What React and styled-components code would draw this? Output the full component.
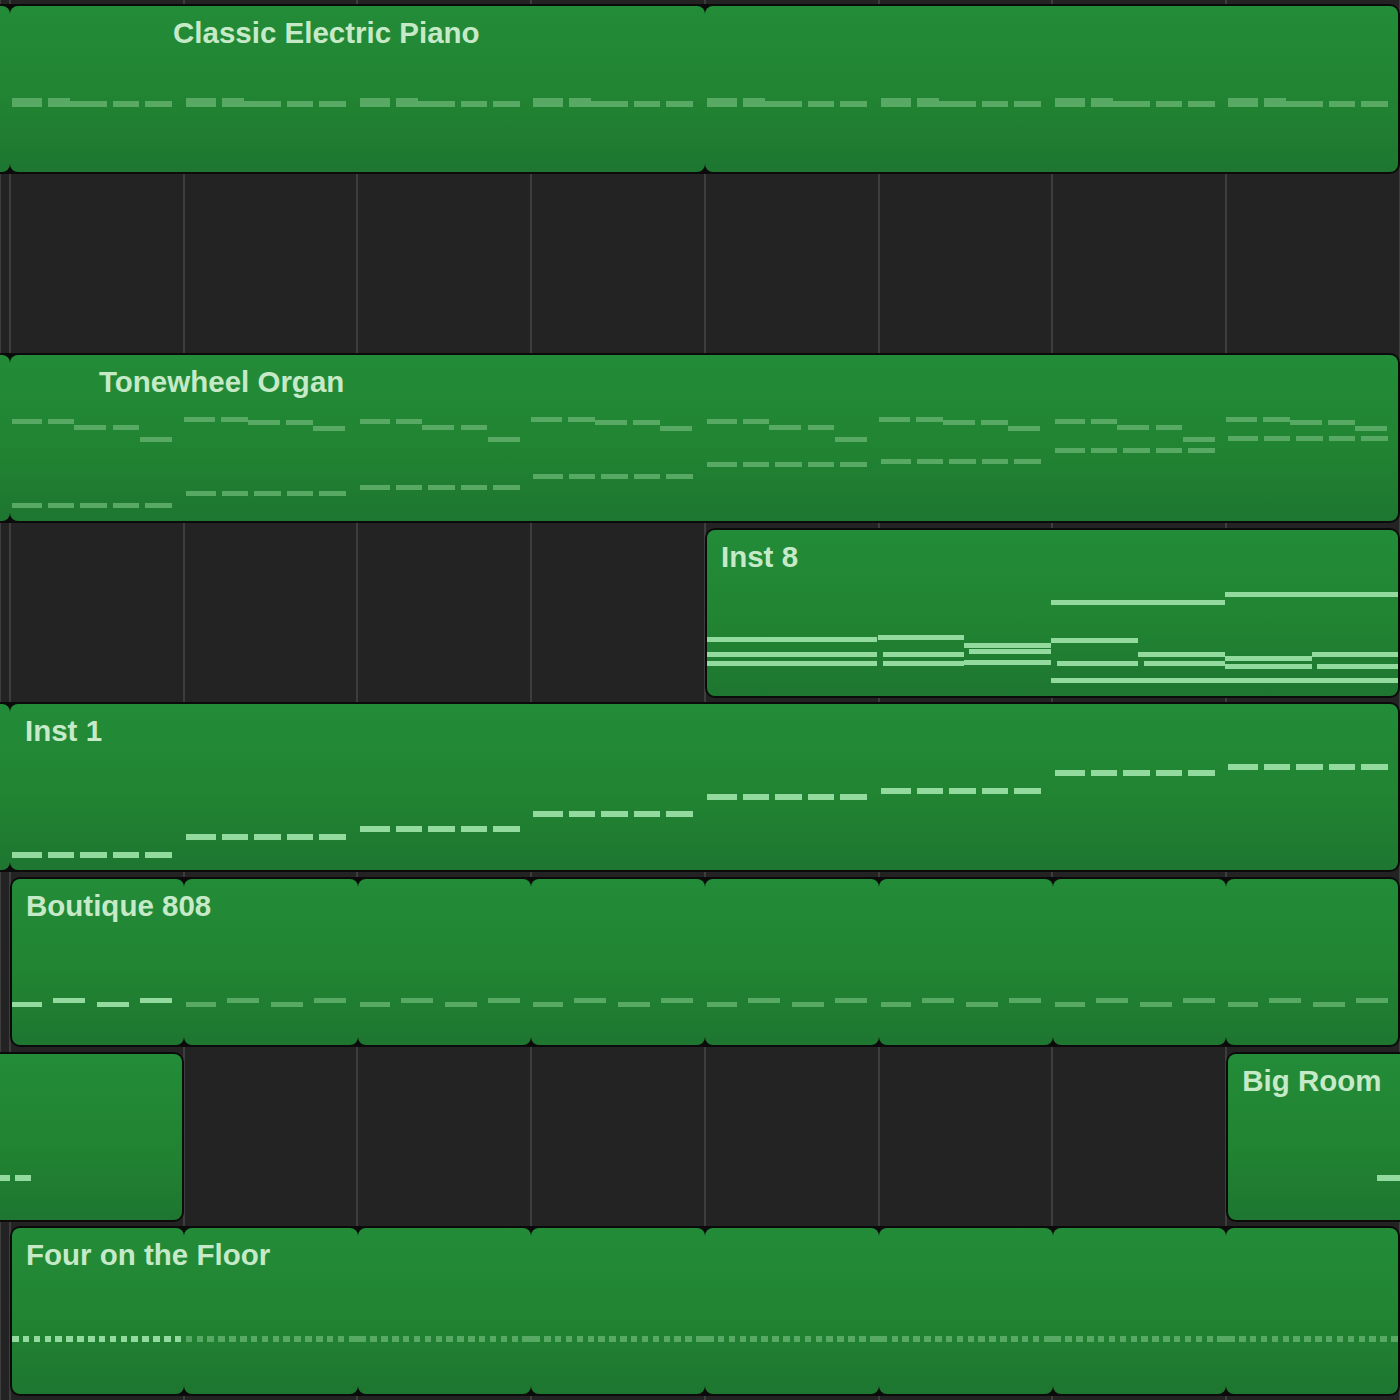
import styled, { createGlobalStyle } from "styled-components";

const BAR = 173.75;
// x of grid lines 1..10 (line 1 = left page edge, line 2 = first bar line)
const LINES = [0, 10, ...Array.from({ length: 8 }, (_, i) => 10 + BAR * (i + 1))];
const barX = (k) => 10 + k * BAR;

const BRIGHT = "#93da9f";
const DIM = "#57a963";

const GlobalStyle = createGlobalStyle`
  body {
    margin: 0;
    background: #232323;
  }
`;

const Arrange = styled.div`
  width: 1400px;
  height: 1400px;
  overflow: hidden;
  box-sizing: border-box;
  padding-top: 4px;
  display: flex;
  flex-direction: column;
  gap: 4.6px;
  background-color: #232323;
  background-image: repeating-linear-gradient(
    to right,
    #3d3d3d 0,
    #3d3d3d 2px,
    transparent 2px,
    transparent ${BAR}px
  );
  background-position: 9px 0;
  font-family: "Liberation Sans", Arial, sans-serif;
`;

const Track = styled.div`
  height: 170px;
  flex: none;
  display: grid;
  grid-template-columns: 10px repeat(8, 1fr);
`;

const Lane = styled.div`
  grid-column: ${(p) => p.$from} / ${(p) => p.$to};
  position: relative;
  display: grid;
  grid-template-columns: ${(p) => p.$cols};
  box-sizing: border-box;
  padding: 2px ${(p) => (p.$openEnd ? 0 : 2)}px 2px ${(p) => (p.$openStart ? 0 : 2)}px;
  background: #0b0b0b;
  border-radius: ${(p) => (p.$openStart ? 0 : 10)}px ${(p) => (p.$openEnd ? 0 : 10)}px
    ${(p) => (p.$openEnd ? 0 : 10)}px ${(p) => (p.$openStart ? 0 : 10)}px;
`;

const Segment = styled.div`
  min-width: 0;
  box-sizing: border-box;
  padding: 12px 0 0 ${(p) => p.$indent}px;
  background: linear-gradient(180deg, #238c38 0%, #218432 55%, #1e7630 100%);
  border-radius: ${(p) => (p.$squareLeft ? 0 : 8)}px ${(p) => (p.$squareRight ? 0 : 8)}px
    ${(p) => (p.$squareRight ? 0 : 8)}px ${(p) => (p.$squareLeft ? 0 : 8)}px;
`;

const Title = styled.div`
  position: relative;
  z-index: 1;
  font-size: 29.5px;
  line-height: 29px;
  font-weight: 700;
  color: #c6eac8;
  white-space: nowrap;
`;

const NoteLayer = styled.div`
  position: absolute;
  inset: 0;
  pointer-events: none;
`;

const Note = styled.span`
  position: absolute;
  background: ${(p) => (p.$bright ? BRIGHT : DIM)};
`;

/* ---------- note data (x in page px, y relative to lane top) ---------- */

const pianoNotes = [];
for (let k = 0; k < 8; k++) {
  const bx = barX(k);
  [
    [2, 30, 94, 9],
    [38, 22, 94, 9],
    [60, 37, 97, 6],
    [103, 26, 97, 6],
    [135, 27, 97, 6],
  ].forEach(([o, w, y, h]) => pianoNotes.push({ x: bx + o, w, y, h }));
}

const organBass = [150, 138, 132, 121, 109, 106, 95, 83];
const organNotes = [];
for (let k = 0; k < 8; k++) {
  const bx = barX(k);
  const upper =
    k % 2 === 0
      ? [[2, 30, 66], [38, 26, 66], [64, 32, 72], [103, 26, 72], [130, 32, 84]]
      : [[0, 31, 64], [37, 27, 64], [64, 32, 67], [102, 27, 67], [129, 32, 73]];
  upper.forEach(([o, w, y]) => organNotes.push({ x: bx + o, w, y, h: 5 }));
  [[2, 30], [38, 26], [70, 27], [103, 26], [135, 27]].forEach(([o, w]) =>
    organNotes.push({ x: bx + o, w, y: organBass[k], h: 5 })
  );
}

const inst8Notes = [
  [707, 877, 109], [707, 877, 124], [707, 877, 133],
  [878, 964, 107], [883, 964, 124], [883, 964, 133],
  [964, 1051, 115], [969, 1051, 121], [964, 1051, 132],
  [1051, 1225, 72], [1051, 1138, 110], [1138, 1225, 124],
  [1057, 1138, 133], [1144, 1225, 133], [1051, 1398, 150],
  [1225, 1398, 64], [1225, 1312, 128], [1312, 1398, 124],
  [1225, 1312, 136], [1317, 1398, 136],
].map(([a, b, y]) => ({ x: a, w: b - a, y, h: 5, bright: true }));

const inst1Y = [150, 132, 124, 109, 92, 86, 68, 62];
const inst1Notes = [];
for (let k = 0; k < 8; k++) {
  const bx = barX(k);
  [[2, 30], [38, 26], [70, 27], [103, 26], [135, 27]].forEach(([o, w]) =>
    inst1Notes.push({ x: bx + o, w, y: inst1Y[k], h: 5.5, bright: true })
  );
}

const drumNotes = [];
for (let k = 0; k < 8; k++) {
  const bx = barX(k);
  [[2, 30, 125], [43, 32, 121], [87, 32, 125], [130, 32, 121]].forEach(([o, w, y]) =>
    drumNotes.push({ x: bx + o, w, y, h: 5, bright: k === 0 })
  );
}

const floorNotes = [];
for (let k = 0; k < 8; k++) {
  const bx = barX(k);
  for (let j = 0; j < 16; j++) {
    const wide = j === 15 && k > 0 && k < 7;
    floorNotes.push({ x: bx + 2 + j * 10.86, w: wide ? 16 : 6.5, y: 110, h: 5.5, bright: k === 0 });
  }
}

const tailNotes = [
  { x: 0, w: 10, y: 123.5, h: 6, bright: true },
  { x: 15, w: 16, y: 123.5, h: 6, bright: true },
];
const bigRoomNotes = [{ x: 1377, w: 23, y: 123.5, h: 6, bright: true }];

/* ---------- tracks ---------- */

const tracks = [
  [{ from: 1, to: 10, openStart: true, spans: [1, 4, 4], label: "Classic Electric Piano", labelSeg: 1, indent: 163, notes: pianoNotes }],
  [],
  [{ from: 1, to: 10, openStart: true, spans: [1, 8], label: "Tonewheel Organ", labelSeg: 1, indent: 89, notes: organNotes }],
  [{ from: 6, to: 10, spans: [4], label: "Inst 8", labelSeg: 0, indent: 14, notes: inst8Notes }],
  [{ from: 1, to: 10, openStart: true, spans: [1, 8], label: "Inst 1", labelSeg: 1, indent: 15, notes: inst1Notes }],
  [{ from: 2, to: 10, spans: [1, 1, 1, 1, 1, 1, 1, 1], label: "Boutique 808", labelSeg: 0, indent: 14, notes: drumNotes }],
  [
    { from: 1, to: 3, openStart: true, spans: [2], notes: tailNotes },
    { from: 9, to: 10, openEnd: true, spans: [1], label: "Big Room", labelSeg: 0, indent: 14, notes: bigRoomNotes },
  ],
  [{ from: 2, to: 10, spans: [1, 1, 1, 1, 1, 1, 1, 1], label: "Four on the Floor", labelSeg: 0, indent: 14, notes: floorNotes }],
];

function Region({ from, to, openStart, openEnd, spans, label, labelSeg, indent, notes }) {
  const padL = openStart ? 0 : 2;
  const padR = openEnd ? 0 : 2;
  let line = from;
  const widths = spans.map((s, i) => {
    let w = LINES[line + s - 1] - LINES[line - 1];
    line += s;
    if (i === 0) w -= padL;
    if (i === spans.length - 1) w -= padR;
    return w;
  });
  const x0 = LINES[from - 1];

  return (
    <Lane
      $from={from}
      $to={to}
      $openStart={openStart}
      $openEnd={openEnd}
      $cols={widths.map((w) => `${w}px`).join(" ")}
    >
      {widths.map((_, i) => (
        <Segment
          key={i}
          $indent={i === labelSeg ? indent : 0}
          $squareLeft={openStart && i === 0}
          $squareRight={openEnd && i === widths.length - 1}
        >
          {i === labelSeg && label ? <Title>{label}</Title> : null}
        </Segment>
      ))}
      <NoteLayer>
        {notes.map((n, i) => (
          <Note
            key={i}
            $bright={n.bright}
            style={{ left: n.x - x0, top: n.y, width: n.w, height: n.h }}
          />
        ))}
      </NoteLayer>
    </Lane>
  );
}

export default function App() {
  return (
    <>
      <GlobalStyle />
      <Arrange>
        {tracks.map((regions, r) => (
          <Track key={r}>
            {regions.map((reg, i) => (
              <Region key={i} {...reg} />
            ))}
          </Track>
        ))}
      </Arrange>
    </>
  );
}
